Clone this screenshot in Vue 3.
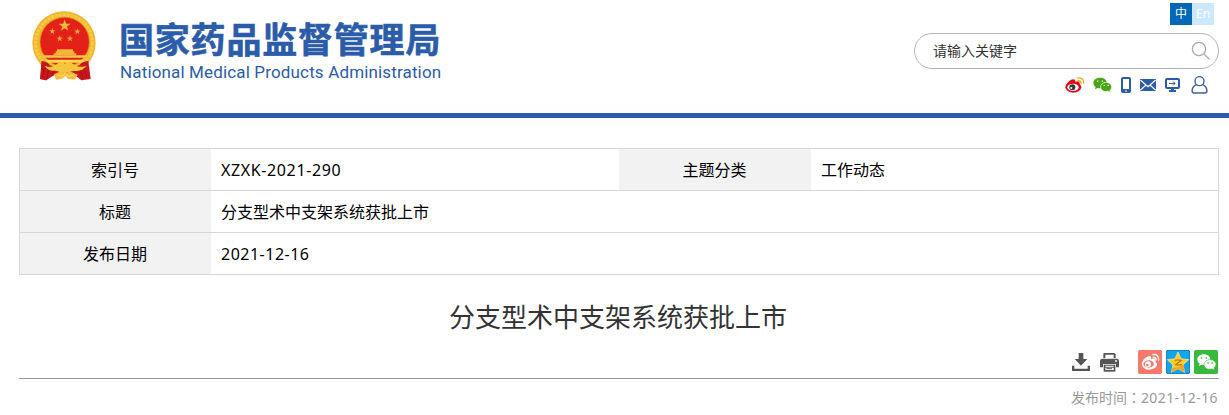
<template>
  <div class="page">
    <header class="header">
      <div class="brand">
        <!-- National emblem -->
        <svg class="emblem" viewBox="33 30 201 216" aria-hidden="true">
          <circle cx="132" cy="129" r="95" fill="#f0b62c" />
          <circle cx="132" cy="129" r="85" fill="none" stroke="#f8cb45" stroke-width="9" stroke-dasharray="9 3" />
          <circle cx="134" cy="126" r="74" fill="#e32118" stroke="#cf9a22" stroke-width="2" />
          <path :d="star(134, 77, 19)" fill="#f5b93a" />
          <path v-for="(s, i) in smallStars" :key="i" :d="star(s[0], s[1], 10)" fill="#f2a93b" />
          <path d="M101 166v-6h6v-6h4v-6h48v6h4v6h6v6Z" fill="#f2b53a" />
          <path d="M66 166h136l-3 7H69Z" fill="#f8c64a" />
          <path d="M75 179h119l-8 9H82Z" fill="#fbdc48" />
          <path d="M65 183q18 2 24 12 22 12 44 14 24-2 46-14 6-10 26-12l7 54-28 4-17-14-28-8h-12l-28 8-20 14-19-4Z" fill="#c9171c" />
          <path d="M65 183 61 237 79 241Z" fill="#c9171c" />
          <path d="M74 198q22 8 42-10l12-3 7 6 7-6 12 3q20 18 46 10-16 18-38 14l-14 4-14 4-14-4-14-4q-22 2-32-14Z" fill="#f7c63f" />
          <path d="m102 223 22-10 12 8 12-8 25 11-9 15-20-3-8-9-9 9-19 3Z" fill="#f3bd3a" />
          <path d="m112 226 14 3 10-9 10 9 14-3" fill="none" stroke="#fbe277" stroke-width="3" />
          <path d="m72 205-4 27m17-20-5 25m18-22-3 14m98-24 7 27m-18-20 6 24" stroke="#a50f15" stroke-width="3" />
        </svg>
        <div class="brand-text">
          <div class="brand-cn">国家药品监督管理局</div>
          <div class="brand-en">National Medical Products Administration</div>
        </div>
      </div>

      <div class="tools">
        <div class="lang">
          <a class="lang-item active">中</a>
          <a class="lang-item">En</a>
        </div>
        <div class="search">
          <span class="search-text">请输入关键字</span>
          <svg class="search-icon" viewBox="0 0 20 20">
            <circle cx="8" cy="8" r="6.6" />
            <path d="m13 13 5.6 5.4" />
          </svg>
        </div>
        <div class="links">
          <!-- Weibo -->
          <svg class="weibo" viewBox="0 0 60 48">
            <ellipse cx="25" cy="31" rx="24" ry="16" fill="#e10b13" />
            <path d="M3 25Q12 8 25 7q6 0 6 7 13-4 13 5l-1 12Z" fill="#e10b13" />
            <ellipse cx="24" cy="31" rx="17" ry="11" fill="#fff" />
            <circle cx="22" cy="31" r="9" fill="#3d3538" />
            <circle cx="19" cy="33" r="3" fill="#fff" />
            <path d="M38 3q18-3 18 16M40 11q8-1 8 8" fill="none" stroke="#edab18" stroke-width="4" stroke-linecap="round" />
          </svg>
          <!-- WeChat -->
          <svg class="wechat" viewBox="0 0 58 46">
            <path d="M21 1C9 1 1 8 1 17q0 7 7 12l-2 7 8-4q7 2 14 0 13-5 14-16C41 7 33 1 21 1Z" fill="#48a516" />
            <path d="M40 15c-10 0-17 6-17 14s7 14 17 14l7-1 7 4-2-6q5-5 5-11c0-8-7-14-17-14Z" fill="#48a516" stroke="#fff" stroke-width="2" />
            <path d="M14 11h1M28 11h1M34 24h1M46 24h1" stroke="#fff" stroke-width="4" stroke-linecap="round" />
          </svg>
          <!-- Mobile -->
          <svg class="mobile" viewBox="0 0 30 48">
            <rect x="3" y="3" width="24" height="42" rx="3" fill="none" stroke="#2a5caa" stroke-width="6" />
            <path d="M3 41h24" stroke="#2a5caa" stroke-width="10" />
            <path d="M12 42h6" stroke="#fff" stroke-width="3" />
          </svg>
          <!-- Mail -->
          <svg class="mail" viewBox="0 0 48 36">
            <rect width="48" height="36" fill="#2a5caa" />
            <path d="m1 3 23 20L47 3M1 34l17-16m12 0 17 16" fill="none" stroke="#fff" stroke-width="3.5" />
          </svg>
          <!-- Desktop -->
          <svg class="desktop" viewBox="0 0 45 42">
            <rect x="3" y="3" width="39" height="27" rx="3" fill="none" stroke="#2a5caa" stroke-width="6" />
            <path d="M12 16.500h18m-6-6 6 6-6 6" fill="none" stroke="#2a5caa" stroke-width="3" />
            <path d="M18 30h9v6h6v6H12v-6h6Z" fill="#2a5caa" />
          </svg>
          <!-- User -->
          <svg class="user" viewBox="0 0 50 56">
            <circle cx="25" cy="16" r="14" />
            <path d="M15 27Q2 33 2 47q0 6 6 6h34q6 0 6-6 0-14-13-20" />
          </svg>
        </div>
      </div>
    </header>

    <main class="content">
      <table class="info">
        <tbody>
          <tr>
            <th>索引号</th>
            <td class="first"><span class="code">XZXK-2021-290</span></td>
            <th class="second">主题分类</th>
            <td class="cn">工作动态</td>
          </tr>
          <tr>
            <th>标题</th>
            <td class="cn" colspan="3">分支型术中支架系统获批上市</td>
          </tr>
          <tr>
            <th>发布日期</th>
            <td colspan="3"><span class="date">2021-12-16</span></td>
          </tr>
        </tbody>
      </table>

      <h1 class="title">分支型术中支架系统获批上市</h1>

      <div class="actions">
        <!-- Download -->
        <svg class="download" viewBox="0 0 54 54">
          <path d="M20 0h14v18h12L27 38 8 18h12Z" />
          <path d="M0 38h7v9h40v-9h7v16H0Z" />
        </svg>
        <!-- Print -->
        <svg class="print" viewBox="0 0 57 57">
          <path d="M12 0h31l4 4v11H10V2Z" />
          <path d="M7 17h43q7 0 7 7v19h-9V33H9v10H0V24q0-7 7-7Z" />
          <path d="M11 35h35v21H11Z" />
          <path d="M16 5h25v11H16ZM16 38h25v3H16ZM16 44h25v7H16Z" fill="#fff" />
          <path d="M19 47h17" stroke="#555" stroke-width="3" />
          <circle cx="48" cy="24" r="3" fill="#fff" />
        </svg>
        <div class="share">
          <svg viewBox="0 0 72 72">
            <rect width="72" height="72" rx="5" fill="#f6796c" />
            <path d="M11 39q6-17 23-21 7 0 5 9 14-4 14 5l-1 4q7 3 5 10-6 13-25 13-19 0-21-20Z" fill="#fff" />
            <ellipse cx="32" cy="42" rx="16" ry="11" fill="#f6796c" />
            <circle cx="30" cy="43" r="9" fill="#fff" />
            <circle cx="28" cy="45" r="4" fill="#f6796c" />
            <path d="M44 14q18-3 18 17M46 22q8-1 8 8" fill="none" stroke="#fff" stroke-width="4" stroke-linecap="round" />
          </svg>
          <svg viewBox="0 0 72 72">
            <rect x="1" y="1" width="70" height="70" rx="5" fill="#12a5ec" stroke="#0879c5" stroke-width="3" />
            <path d="m36 6 9 20 23 3-17 16 5 22-20-11-20 11 5-22L4 29l23-3Z" fill="#ffca2c" stroke="#fff0a0" stroke-width="2" />
            <path d="m53 43 3 24-20-11-20 11 3-14q20 2 34-10Z" fill="#f6a41d" />
            <path d="M26 31q10-2 20 0L29 44q9 2 19 0" fill="none" stroke="#b8730c" stroke-width="3.500" />
          </svg>
          <svg viewBox="0 0 72 72">
            <rect width="72" height="72" rx="5" fill="#39b83e" />
            <path d="M29 13c-11 0-19 7-19 16q0 7 7 12l-2 7 8-4 9 1c11 0 17-8 17-16 0-9-8-16-20-16Z" fill="#fff" />
            <path d="M48 29c-10 0-18 7-18 15s8 14 18 14l7-1 7 4-2-7q6-4 6-11c0-8-8-14-18-14Z" fill="#fff" stroke="#39b83e" stroke-width="2" />
            <path d="M22 24h1M36 24h1M42 39h1M54 39h1" stroke="#39b83e" stroke-width="5" stroke-linecap="round" />
          </svg>
        </div>
      </div>
      <div class="publish">发布时间<i class="colon">：</i><span>2021-12-16</span></div>
    </main>
  </div>
</template>

<script setup>
const smallStars = [[97, 94], [172, 95], [119, 116], [150, 116]];

// Five-pointed star path around a centre point
function star(cx, cy, r) {
  const points = [];
  for (let i = 0; i < 10; i++) {
    const radius = i % 2 ? r * 0.39 : r;
    const angle = (i * Math.PI) / 5 - Math.PI / 2;
    points.push(`${(cx + radius * Math.cos(angle)).toFixed(1)} ${(cy + radius * Math.sin(angle)).toFixed(1)}`);
  }
  return `M${points.join('L')}Z`;
}
</script>

<style>
body {
  margin: 0;
  background: #fff;
}
</style>

<style scoped>
.page {
  height: 415px;
  overflow: hidden;
  font-family: "Noto Sans", "Noto Sans CJK SC", sans-serif;
  color: #000;
}

svg {
  display: block;
  flex: none;
}

.header {
  box-sizing: border-box;
  height: 118px;
  padding: 0 10px 0 31px;
  border-bottom: 5px solid #2a5caa;
  display: flex;
  justify-content: space-between;
}

.brand {
  display: flex;
  padding-top: 10px;
}

.emblem {
  width: 67px;
  height: 72px;
}

.brand-text {
  margin-left: 21px;
  padding-top: 7px;
  color: #2a5caa;
  white-space: nowrap;
}

.brand-cn {
  height: 42px;
  font: bold 35px/42px "Noto Sans CJK SC", sans-serif;
  letter-spacing: 0.8px;
  -webkit-text-stroke: 0.6px #2a5caa;
}

.brand-en {
  height: 24px;
  padding-left: 1px;
  font: 17px/26px Roboto, sans-serif;
  letter-spacing: 0.15px;
}

.tools {
  display: flex;
  flex-direction: column;
  align-items: flex-end;
  padding-top: 3px;
}

.lang {
  display: flex;
  margin-right: 5px;
}

.lang-item {
  width: 22px;
  height: 22px;
  background: #cce8ff;
  color: #fff;
  font-size: 12px;
  line-height: 21px;
  text-align: center;
}

.lang-item.active {
  background: #0068b7;
}

.search {
  box-sizing: border-box;
  width: 305px;
  height: 36px;
  margin-top: 8px;
  padding: 0 7px 0 18px;
  border: 1px solid #b5b5b5;
  border-radius: 18px;
  display: flex;
  align-items: center;
  justify-content: space-between;
}

.search-text {
  padding-bottom: 2px;
  font-size: 14px;
  color: #333;
}

.search-icon {
  width: 20px;
  height: 20px;
  fill: none;
  stroke: #aaa;
  stroke-width: 1.3;
}

.links {
  display: flex;
  align-items: center;
  height: 20px;
  margin: 6px 11px 0 0;
}

.weibo {
  width: 20px;
  height: 16px;
}

.wechat {
  width: 19px;
  height: 16px;
  margin-left: 8px;
}

.mobile {
  width: 10px;
  height: 16px;
  margin-left: 9px;
}

.mail {
  width: 16px;
  height: 12px;
  margin-left: 9px;
}

.desktop {
  width: 15px;
  height: 14px;
  margin-left: 9px;
}

.user {
  width: 17px;
  height: 18px;
  margin-left: 11px;
  fill: none;
  stroke: #3f5eaa;
  stroke-width: 4.5;
}

.content {
  padding: 30px 10px 0 19px;
}

.info {
  width: 1200px;
  border-collapse: collapse;
  table-layout: fixed;
  font-size: 16px;
}

.info tr {
  height: 42px;
  border: 1px solid #d7d7d7;
}

.info th {
  width: 190px;
  padding: 0 1px 2px 0;
  background: #f2f2f2;
  font-weight: normal;
}

.info .second {
  width: 191px;
}

.info td {
  padding: 0 0 0 10px;
}

.info .cn {
  padding-bottom: 2px;
}

.info .first {
  width: 398px;
}

.code {
  letter-spacing: 0.62px;
}

.date {
  letter-spacing: 0.5px;
}

.title {
  margin: 24px 0 0;
  height: 38px;
  padding-right: 2px;
  color: #333;
  font-size: 26px;
  font-weight: normal;
  line-height: 37px;
  text-align: center;
}

.actions {
  display: flex;
  align-items: center;
  justify-content: flex-end;
  height: 24px;
  margin-top: 13px;
  padding: 0 1px 4px 0;
  border-bottom: 1px solid #999;
}

.download {
  width: 18px;
  height: 18px;
  fill: #555;
}

.print {
  width: 19px;
  height: 19px;
  margin-left: 10px;
  fill: #555;
}

.share {
  display: flex;
  gap: 4px;
  margin-left: 19px;
}

.share svg {
  width: 24px;
  height: 24px;
}

.publish {
  height: 36px;
  padding-right: 1px;
  color: #999;
  font-size: 14px;
  line-height: 38px;
  text-align: right;
}

.publish span {
  letter-spacing: 0.4px;
}

/* Full-width colon centred in its cell */
.colon {
  font-family: "Noto Sans CJK TC", sans-serif;
  font-style: normal;
  line-height: 1;
}
</style>
